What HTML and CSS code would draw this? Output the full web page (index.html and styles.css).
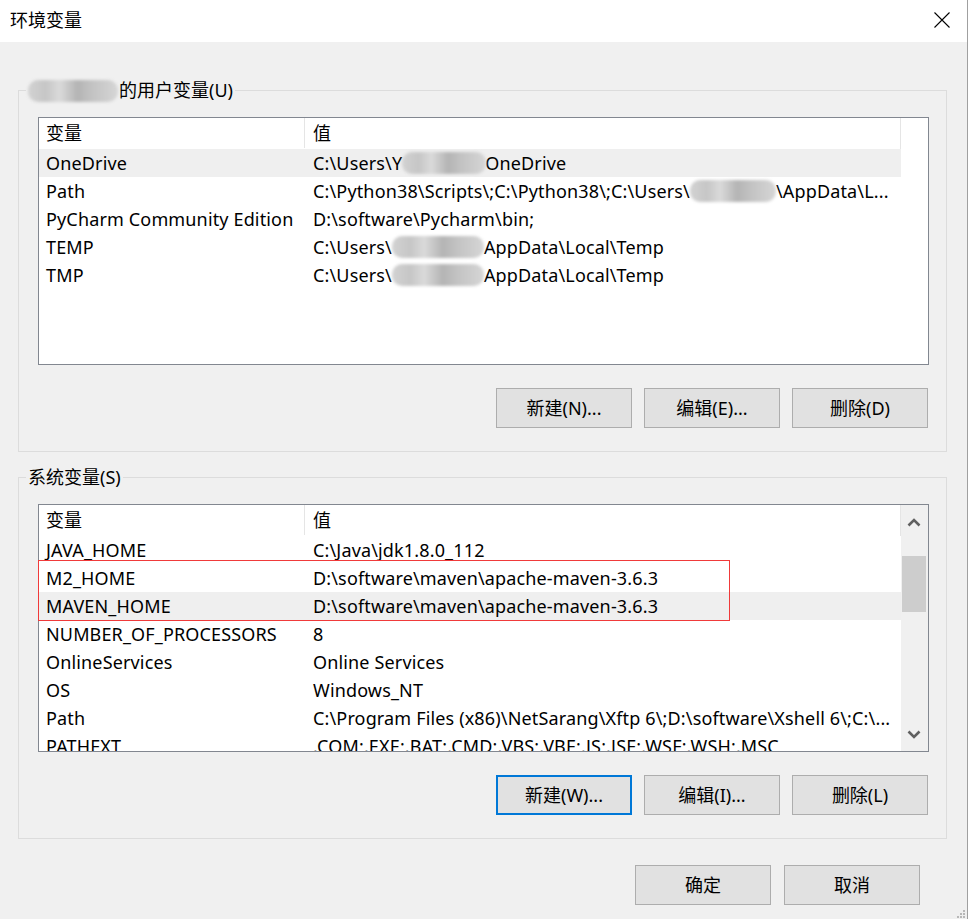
FILE: index.html
```html
<!DOCTYPE html>
<html lang="zh-CN">
<head>
    <meta charset="UTF-8">
    <title>环境变量</title>
    <link rel="stylesheet" href="styles.css">
</head>
<body>
    <div class="window">
        <div class="titlebar">
            <span class="title">环境变量</span>
            <svg class="close" width="16" height="16" viewBox="0 0 16 16">
                <path d="M0.5 0.5 L15.5 15.5 M15.5 0.5 L0.5 15.5" stroke="#000" stroke-width="1.1" fill="none"/>
            </svg>
        </div>

        <div class="main">
            <!-- 用户变量 -->
            <fieldset class="group">
                <legend><span class="blur blur-user"></span>的用户变量(U)</legend>
                <div class="listview">
                    <div class="lv-body">
                        <div class="lv-header">
                            <div class="col-name">变量</div>
                            <div class="col-value">值</div>
                        </div>
                        <div class="lv-row selected">
                            <div class="col-name">OneDrive</div>
                            <div class="col-value">C:\Users\Y<span class="blur blur-a"></span>OneDrive</div>
                        </div>
                        <div class="lv-row">
                            <div class="col-name">Path</div>
                            <div class="col-value">C:\Python38\Scripts\;C:\Python38\;C:\Users\<span class="blur blur-b"></span>\AppData\L...</div>
                        </div>
                        <div class="lv-row">
                            <div class="col-name">PyCharm Community Edition</div>
                            <div class="col-value">D:\software\Pycharm\bin;</div>
                        </div>
                        <div class="lv-row">
                            <div class="col-name">TEMP</div>
                            <div class="col-value">C:\Users\<span class="blur blur-c"></span>AppData\Local\Temp</div>
                        </div>
                        <div class="lv-row">
                            <div class="col-name">TMP</div>
                            <div class="col-value">C:\Users\<span class="blur blur-c"></span>AppData\Local\Temp</div>
                        </div>
                    </div>
                </div>
                <div class="buttons">
                    <button>新建(N)...</button>
                    <button>编辑(E)...</button>
                    <button>删除(D)</button>
                </div>
            </fieldset>

            <!-- 系统变量 -->
            <fieldset class="group group-system">
                <legend>系统变量(S)</legend>
                <div class="listview">
                    <div class="lv-body">
                        <div class="lv-header">
                            <div class="col-name">变量</div>
                            <div class="col-value">值</div>
                        </div>
                        <div class="lv-row">
                            <div class="col-name">JAVA_HOME</div>
                            <div class="col-value">C:\Java\jdk1.8.0_112</div>
                        </div>
                        <div class="lv-row">
                            <div class="col-name">M2_HOME</div>
                            <div class="col-value">D:\software\maven\apache-maven-3.6.3</div>
                        </div>
                        <div class="lv-row selected">
                            <div class="col-name">MAVEN_HOME</div>
                            <div class="col-value">D:\software\maven\apache-maven-3.6.3</div>
                        </div>
                        <div class="lv-row">
                            <div class="col-name">NUMBER_OF_PROCESSORS</div>
                            <div class="col-value">8</div>
                        </div>
                        <div class="lv-row">
                            <div class="col-name">OnlineServices</div>
                            <div class="col-value">Online Services</div>
                        </div>
                        <div class="lv-row">
                            <div class="col-name">OS</div>
                            <div class="col-value">Windows_NT</div>
                        </div>
                        <div class="lv-row">
                            <div class="col-name">Path</div>
                            <div class="col-value">C:\Program Files (x86)\NetSarang\Xftp 6\;D:\software\Xshell 6\;C:\...</div>
                        </div>
                        <div class="lv-row">
                            <div class="col-name">PATHEXT</div>
                            <div class="col-value">.COM;.EXE;.BAT;.CMD;.VBS;.VBE;.JS;.JSE;.WSF;.WSH;.MSC</div>
                        </div>
                    </div>
                    <div class="scrollbar">
                        <div class="sb-btn">
                            <svg width="14" height="9" viewBox="0 0 14 9"><path d="M1.5 7.5 L7 2 L12.5 7.5" stroke="#606060" stroke-width="2.6" fill="none"/></svg>
                        </div>
                        <div class="sb-track"><div class="sb-thumb"></div></div>
                        <div class="sb-btn">
                            <svg width="14" height="9" viewBox="0 0 14 9"><path d="M1.5 1.5 L7 7 L12.5 1.5" stroke="#606060" stroke-width="2.6" fill="none"/></svg>
                        </div>
                    </div>
                    <!-- 红框标注 -->
                    <div class="highlight"></div>
                </div>
                <div class="buttons">
                    <button class="focused">新建(W)...</button>
                    <button>编辑(I)...</button>
                    <button>删除(L)</button>
                </div>
            </fieldset>

            <div class="dialog-actions">
                <button>确定</button>
                <button>取消</button>
            </div>
        </div>

        <svg class="grip" width="10" height="10" viewBox="0 0 10 10">
            <rect x="7" y="1" width="2" height="2" fill="#b8b8b8"/>
            <rect x="4" y="4" width="2" height="2" fill="#b8b8b8"/>
            <rect x="7" y="4" width="2" height="2" fill="#b8b8b8"/>
            <rect x="1" y="7" width="2" height="2" fill="#b8b8b8"/>
            <rect x="4" y="7" width="2" height="2" fill="#b8b8b8"/>
            <rect x="7" y="7" width="2" height="2" fill="#b8b8b8"/>
        </svg>
    </div>
</body>
</html>
```

FILE: styles.css
```css
:root {
    --bg: #f0f0f0;
    --group-border: #dcdcdc;
    --list-border: #828790;
    --btn-bg: #e1e1e1;
    --btn-border: #adadad;
    --accent: #0078d7;
}

* {
    box-sizing: border-box;
}

body {
    margin: 0;
    font-family: "Noto Sans", "Noto Sans CJK SC", sans-serif;
    font-size: 18px;
    color: #000;
    background: var(--bg);
}

.window {
    position: relative;
    width: 968px;
    height: 919px;
    background: var(--bg);
    border-right: 1px solid #a0a0a0;
    overflow: hidden;
}

.titlebar {
    height: 42px;
    background: #fff;
    display: flex;
    align-items: center;
    justify-content: space-between;
    padding: 0 17px 3px 10px;
}

.title {
    line-height: 24px;
}

.close {
    display: block;
}

.main {
    padding: 36px 20px 0 18px;
}

/* 分组框 */
.group {
    margin: 0;
    padding: 15px 17px 23px 19px;
    border: 1px solid var(--group-border);
    min-width: 0;
}

.group legend {
    margin-left: -12px;
    padding: 0 2px;
    line-height: 24px;
    height: 24px;
}

.group-system {
    margin-top: 13px;
}

/* 列表 */
.listview {
    position: relative;
    display: flex;
    height: 248px;
    background: #fff;
    border: 1px solid var(--list-border);
}

.lv-body {
    width: 862px;
    flex: none;
    overflow: hidden;
}

.lv-header,
.lv-row {
    display: flex;
    white-space: nowrap;
}

.lv-header {
    height: 31px;
    line-height: 30px;
    border-right: 1px solid #e5e5e5;
}

.lv-header .col-name {
    border-right: 1px solid #e5e5e5;
    height: 30px;
}

.lv-row {
    height: 28px;
    line-height: 28px;
    letter-spacing: 0.15px;
}

.lv-row.selected {
    background: #efefef;
}

.col-name {
    width: 266px;
    padding-left: 7px;
    overflow: hidden;
}

.col-value {
    flex: 1;
    padding-left: 8px;
    overflow: hidden;
}

/* 打码 */
.blur {
    display: inline-block;
    height: 22px;
    vertical-align: -4px;
    border-radius: 10px;
    background: linear-gradient(90deg, #d2d2d2 0%, #c6c6c6 20%, #dadada 35%, #b4b4b4 55%, #c2c2c2 70%, #d6d6d6 100%);
    filter: blur(1.5px);
}

.blur-user {
    width: 90px;
    margin-right: 1px;
    vertical-align: -5px;
}

.blur-a {
    width: 84px;
    margin-right: -1px;
}

.blur-b {
    width: 86px;
}

.blur-c {
    width: 92px;
}

/* 滚动条 */
.scrollbar {
    width: 27px;
    flex: none;
    margin-left: auto;
    display: flex;
    flex-direction: column;
    background: var(--bg);
}

.sb-btn {
    height: 34px;
    display: flex;
    align-items: center;
    justify-content: center;
    padding-right: 1px;
}

.sb-track {
    flex: 1;
    padding: 17px 2px 0 1px;
}

.sb-thumb {
    height: 56px;
    background: #cdcdcd;
}

.highlight {
    position: absolute;
    left: -1px;
    top: 55px;
    width: 692px;
    height: 61px;
    border: 1px solid #f03a3a;
}

/* 按钮 */
.buttons,
.dialog-actions {
    display: flex;
    justify-content: flex-end;
    gap: 12px;
}

.buttons {
    margin-top: 23px;
    margin-right: 1px;
}

.dialog-actions {
    margin-top: 26px;
    margin-right: 27px;
    gap: 13px;
}

button {
    width: 136px;
    height: 40px;
    background: var(--btn-bg);
    border: 1px solid var(--btn-border);
    font-family: inherit;
    font-size: 18px;
    color: #000;
    padding: 0 0 2px;
}

button.focused {
    border: 2px solid var(--accent);
}

.grip {
    position: absolute;
    right: 1px;
    bottom: 0;
}
```
